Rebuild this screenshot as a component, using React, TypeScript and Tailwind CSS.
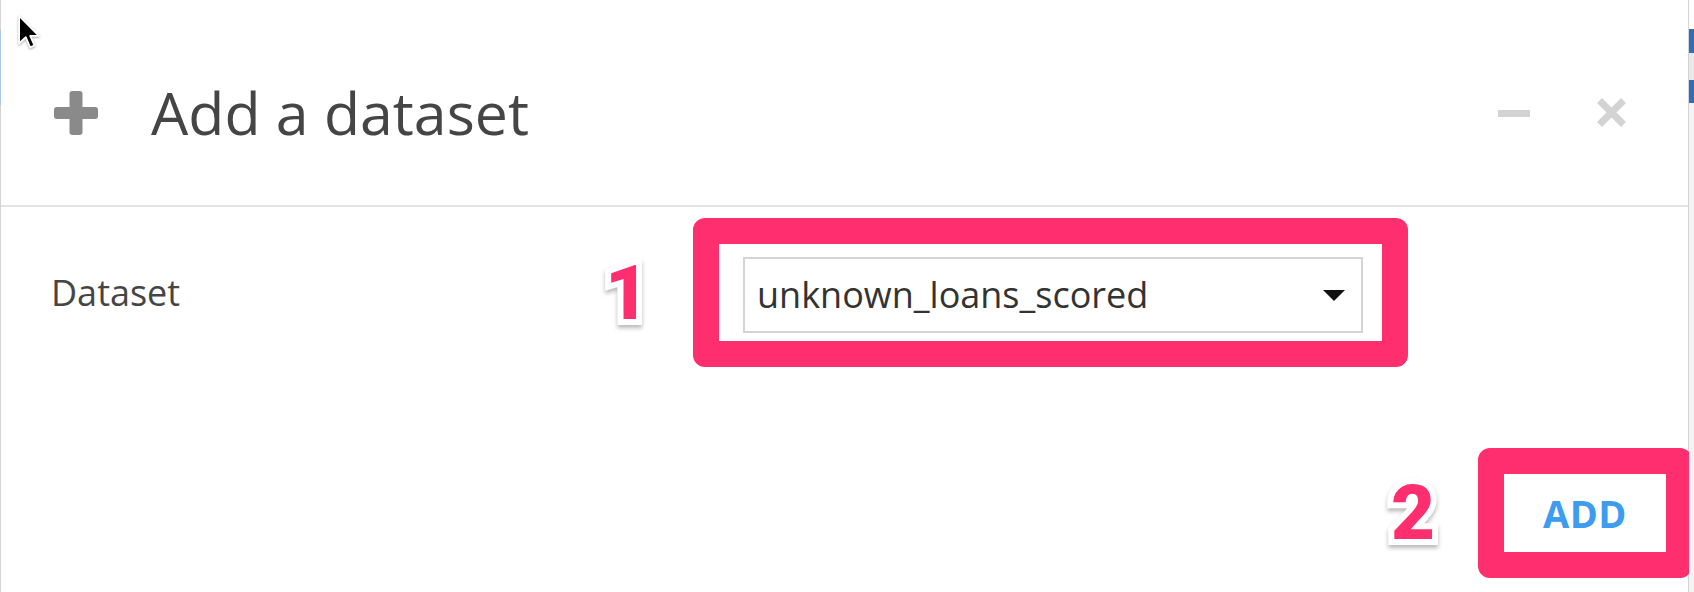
import React from "react";

const PINK = "#ff2e6e";

function Cursor() {
  return (
    <svg width="24" height="36" viewBox="0 0 13 20" className="drop-shadow-[0_1px_1px_rgba(0,0,0,0.35)]">
      <path
        d="M1 1 V16.4 L4.7 12.9 L7.1 18.5 L9.5 17.5 L7.2 12.1 H12 Z"
        fill="#000"
        stroke="#fff"
        strokeWidth="1"
        strokeLinejoin="round"
      />
    </svg>
  );
}

function Marker({ n }: { n: string }) {
  return (
    <span className="font-['Roboto','Liberation_Sans',sans-serif] font-black text-[76px] leading-none text-[#ff2e6e] [-webkit-text-stroke:12px_white] [paint-order:stroke_fill] drop-shadow-[0_3px_2px_rgba(0,0,0,0.28)]">
      {n}
    </span>
  );
}

export default function App() {
  return (
    <div className="relative w-[1694px] h-[592px] overflow-hidden bg-white flex font-['Open_Sans','Noto_Sans',sans-serif]">
      {/* dialog */}
      <div className="w-[1689px] h-full border-l border-r border-[#d4d4d4] flex flex-col">
        {/* header */}
        <div className="h-[207px] pt-[20px] flex items-center border-b-2 border-[#e4e4e4] pl-[53px] pr-[61px]">
          <svg width="44" height="44" viewBox="0 0 44 44">
            <rect x="15.5" y="0" width="13" height="44" rx="3" fill="#8a8a8a" />
            <rect x="0" y="16" width="44" height="12" rx="3" fill="#8a8a8a" />
          </svg>
          <h1 className="ml-[53px] text-[59px] leading-none text-[#454545]">Add a dataset</h1>
          <div className="flex-1" />
          <svg width="32" height="32" viewBox="0 0 32 32">
            <rect x="0" y="13" width="32" height="7" fill="#d3d3d3" />
          </svg>
          <svg width="31" height="31" viewBox="0 0 31 31" className="ml-[66px]">
            <path d="M3.5 3.5 L27.5 27.5 M27.5 3.5 L3.5 27.5" stroke="#d3d3d3" strokeWidth="7" />
          </svg>
        </div>

        {/* field row */}
        <div className="mt-[11px] flex items-center pl-[50px]">
          <span className="w-[552px] text-[36px] text-[#454545]">Dataset</span>
          <span className="w-[90px] pl-[2px]">
            <Marker n="1" />
          </span>
          <div className="border-[26px] border-[#ff2e6e] rounded-[12px] pl-[24px] pr-[19px] pt-[13px] pb-[8px]">
            <div className="w-[620px] h-[76px] border-2 border-[#d4d4d4] flex items-center justify-between pl-[12px] pr-[16px]">
              <span className="text-[36px] text-[#333]">unknown_loans_scored</span>
              <svg width="22" height="11" viewBox="0 0 22 11">
                <path d="M0 0 H22 L11 11 Z" fill="#111" />
              </svg>
            </div>
          </div>
        </div>

        {/* footer */}
        <div className="mt-[81px] flex items-center justify-end -mr-[4px]">
          <Marker n="2" />
          <div
            className="ml-[43px] w-[214px] h-[130px] border-[26px] rounded-[12px] flex items-center justify-center bg-white"
            style={{ borderColor: PINK }}
          >
            <span className="font-bold text-[38px] leading-none text-[#3d9bf0] tracking-[0.5px]">ADD</span>
          </div>
        </div>
      </div>

      {/* window behind, right sliver */}
      <div className="flex-1 flex flex-col">
        <div className="h-[29px]" />
        <div className="h-[24px] bg-[#2f6fb8]" />
        <div className="h-[27px] bg-[#e8e8e8]" />
        <div className="h-[23px] bg-[#2f6fb8]" />
        <div className="flex-1 bg-[#f4f4f4]" />
      </div>

      {/* left edge tint of window behind */}
      <div className="absolute left-0 top-[30px] w-[1px] h-[75px] bg-[#a9c9ec]" />

      {/* mouse pointer */}
      <div className="absolute left-[17px] top-[14px]">
        <Cursor />
      </div>
    </div>
  );
}
